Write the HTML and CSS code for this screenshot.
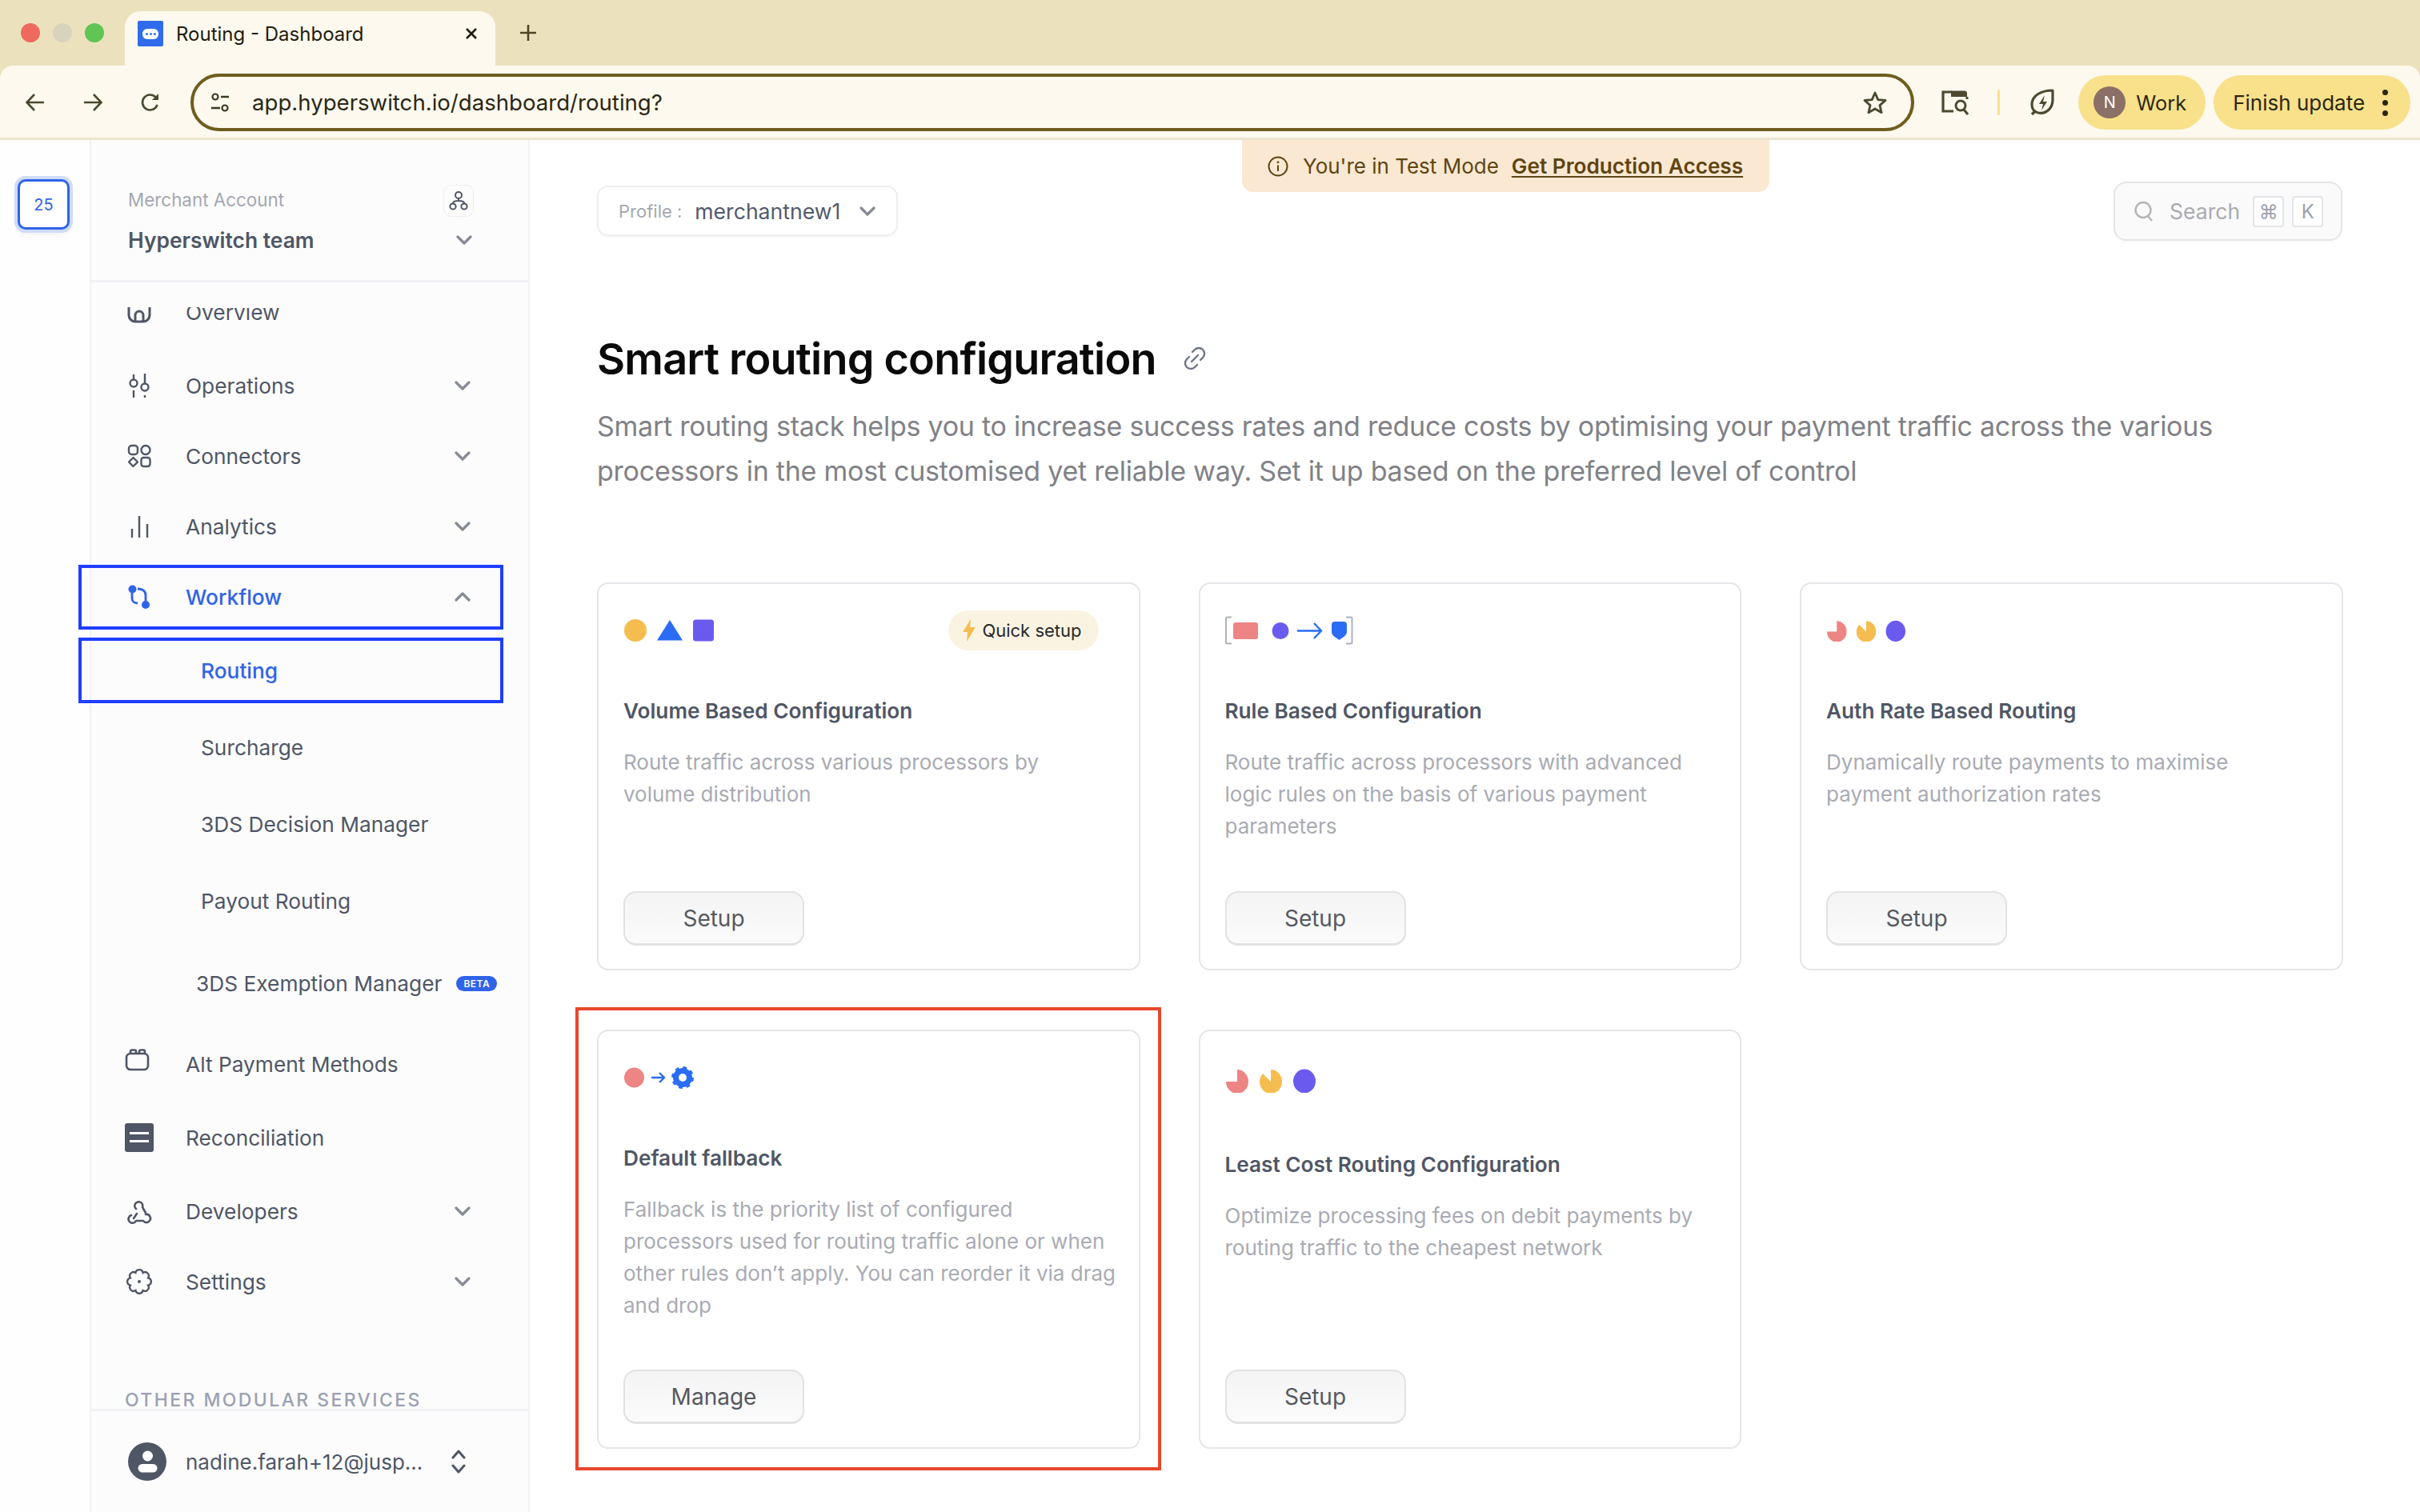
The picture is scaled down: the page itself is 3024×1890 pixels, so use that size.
FILE: index.html
```html
<!DOCTYPE html>
<html lang="en">
<head>
    <meta charset="UTF-8">
    <meta name="viewport" content="width=device-width, initial-scale=1.0">
    <title>Routing - Dashboard</title>
    <link rel="stylesheet" href="styles.css">
</head>
<body>
    <svg class="defs" aria-hidden="true">
        <symbol id="chev-down" viewBox="0 0 20 12"><path d="M2 2l8 8 8-8" fill="none" stroke="currentColor" stroke-width="3.2" stroke-linecap="round" stroke-linejoin="round"/></symbol>
        <symbol id="chev-up" viewBox="0 0 20 12"><path d="M2 10l8-8 8 8" fill="none" stroke="currentColor" stroke-width="3.2" stroke-linecap="round" stroke-linejoin="round"/></symbol>
        <symbol id="pies" viewBox="0 0 112 30">
            <path d="M14 1a14 15 0 1 1-14 15h14z" fill="#ec8583"/>
            <path d="M56 1a14 15 0 1 1-14 15 14 15 0 0 1 4-10l10 10z" fill="#f5bd4f"/>
            <ellipse cx="98" cy="15.500" rx="14" ry="15" fill="#6a5bee"/>
        </symbol>
    </svg>

    <!-- browser chrome -->
    <div class="tab-bar">
        <div class="lights">
            <span class="light red"></span>
            <span class="light grey"></span>
            <span class="light green"></span>
        </div>
        <div class="tab">
            <span class="favicon"><span class="favicon-pill"><i></i><i></i><i></i></span></span>
            <span class="tab-title">Routing - Dashboard</span>
            <svg class="tab-close" viewBox="0 0 16 16"><path d="M2 2l12 12M14 2L2 14" stroke="#1f1c10" stroke-width="2.600"/></svg>
        </div>
        <svg class="tab-new" viewBox="0 0 22 22"><path d="M11 1v20M1 11h20" stroke="#4d4727" stroke-width="2.600"/></svg>
    </div>

    <div class="toolbar">
        <svg class="tool-icon back" viewBox="0 0 26 26"><path d="M24 13H3M12 3L2.500 13l9.500 10" fill="none" stroke="#4d4830" stroke-width="2.600"/></svg>
        <svg class="tool-icon forward" viewBox="0 0 26 26"><path d="M2 13h21M14 3l9.500 10L14 23" fill="none" stroke="#4d4830" stroke-width="2.600"/></svg>
        <svg class="tool-icon reload" viewBox="0 0 26 26"><path d="M21.500 16a9.500 9.500 0 1 1-2-9.500L22 9" fill="none" stroke="#4d4830" stroke-width="2.600"/><path d="M23 2v8h-8z" fill="#4d4830"/></svg>
        <div class="address">
            <svg class="tune" viewBox="0 0 26 26"><circle cx="7" cy="6" r="3.500" fill="none" stroke="#3d3820" stroke-width="2.200"/><path d="M14 6h10M2 20h11" stroke="#3d3820" stroke-width="2.400"/><circle cx="19" cy="20" r="3.500" fill="none" stroke="#3d3820" stroke-width="2.200"/></svg>
            <span class="url">app.hyperswitch.io/dashboard/routing?</span>
            <svg class="star" viewBox="0 0 32 30"><path d="M16 3l3.800 8.600 9.200.9-7 6.100 2.100 9.100L16 23l-8.100 4.700L10 18.600l-7-6.100 9.200-.9z" fill="none" stroke="#4d4830" stroke-width="2.800" stroke-linejoin="round"/></svg>
        </div>
        <svg class="tool-icon lens" viewBox="0 0 36 32"><path d="M14 3H3v24h13" fill="none" stroke="#4d4830" stroke-width="3.200"/><path d="M13 1.500h17a3 3 0 0 1 3 3V9H13z" fill="#4d4830"/><path d="M33 9v3" stroke="#4d4830" stroke-width="3"/><circle cx="25" cy="20" r="6" fill="none" stroke="#4d4830" stroke-width="3"/><path d="M29 25l5 6" stroke="#4d4830" stroke-width="3.200"/></svg>
        <span class="tool-divider"></span>
        <svg class="tool-icon leaf" viewBox="0 0 32 36"><path d="M29 3C15 3 3 9 3 21c0 5 3 9 8 10 10 2 18-6 18-16z" fill="none" stroke="#4d4830" stroke-width="3.200" stroke-linejoin="round"/><path d="M8 28l-5 5" stroke="#4d4830" stroke-width="3.200"/><path d="M19 9l-7 11h5l-2 8 7-11h-5z" fill="#4d4830"/></svg>
        <div class="pill work-pill">
            <span class="pill-avatar">N</span>
            <span>Work</span>
        </div>
        <div class="pill update-pill">
            <span>Finish update</span>
            <span class="dots"><i></i><i></i><i></i></span>
        </div>
    </div>

    <div class="app">
        <div class="rail">
            <div class="rail-btn">25</div>
        </div>

        <aside class="sidebar">
            <div class="merchant">
                <div class="merchant-top">
                    <span class="merchant-label">Merchant Account</span>
                    <span class="org-btn">
                        <svg viewBox="0 0 24 26"><circle cx="12" cy="6" r="4" fill="none" stroke="#4f5665" stroke-width="2"/><circle cx="5" cy="20" r="3.600" fill="none" stroke="#4f5665" stroke-width="2"/><circle cx="19" cy="20" r="3.600" fill="none" stroke="#4f5665" stroke-width="2"/><path d="M12 10v4M5 16c0-2 2-3 7-3s7 1 7 3" fill="none" stroke="#4f5665" stroke-width="2"/></svg>
                    </span>
                </div>
                <div class="merchant-bottom">
                    <span class="merchant-name">Hyperswitch team</span>
                    <svg class="chev"><use href="#chev-down"/></svg>
                </div>
            </div>

            <nav class="nav-scroll">
                <div class="nav-list">
                    <div class="nav-row first">
                        <svg class="nav-icon" viewBox="0 0 32 32"><path d="M3 6v14a8 8 0 0 0 8 8h10a8 8 0 0 0 8-8V6" fill="none" stroke="#4f5665" stroke-width="3"/><path d="M11 28v-8a5 5 0 0 1 10 0v8" fill="none" stroke="#4f5665" stroke-width="3"/></svg>
                        <span class="nav-text">Overview</span>
                    </div>
                    <div class="nav-row">
                        <svg class="nav-icon" viewBox="0 0 32 32"><circle cx="9" cy="13" r="4.500" fill="none" stroke="#4f5665" stroke-width="2.400"/><path d="M9 2v6M9 22v9" stroke="#4f5665" stroke-width="2.400"/><circle cx="23" cy="18" r="4.500" fill="none" stroke="#4f5665" stroke-width="2.400"/><path d="M23 1v12M23 28v3" stroke="#4f5665" stroke-width="2.400"/></svg>
                        <span class="nav-text">Operations</span>
                        <svg class="chev"><use href="#chev-down"/></svg>
                    </div>
                    <div class="nav-row">
                        <svg class="nav-icon" viewBox="0 0 32 32"><rect x="3" y="3" width="11" height="11" rx="3.500" fill="none" stroke="#4f5665" stroke-width="2.400"/><circle cx="24" cy="8.500" r="5.500" fill="none" stroke="#4f5665" stroke-width="2.400"/><path d="M8.500 18l5.500 5.500L8.500 29 3 23.500z" fill="none" stroke="#4f5665" stroke-width="2.400" stroke-linejoin="round"/><rect x="18.500" y="18" width="11" height="11" rx="3" fill="none" stroke="#4f5665" stroke-width="2.400"/></svg>
                        <span class="nav-text">Connectors</span>
                        <svg class="chev"><use href="#chev-down"/></svg>
                    </div>
                    <div class="nav-row">
                        <svg class="nav-icon" viewBox="0 0 32 32"><path d="M7 30V19M16 30V3M26 30V13" stroke="#4f5665" stroke-width="2.400"/></svg>
                        <span class="nav-text">Analytics</span>
                        <svg class="chev"><use href="#chev-down"/></svg>
                    </div>
                    <div class="nav-row active marked">
                        <svg class="nav-icon" viewBox="0 0 32 32"><circle cx="7.500" cy="6.500" r="5" fill="#2f63e8"/><circle cx="24" cy="26" r="5" fill="#2f63e8"/><path d="M7 10v8c0 4 3 6 7 6M14 6c5 0 10 2 10 8v8" fill="none" stroke="#2f63e8" stroke-width="2.800"/></svg>
                        <span class="nav-text">Workflow</span>
                        <svg class="chev"><use href="#chev-up"/></svg>
                    </div>
                    <div class="nav-row sub active marked"><span class="nav-text">Routing</span></div>
                    <div class="nav-row sub"><span class="nav-text">Surcharge</span></div>
                    <div class="nav-row sub"><span class="nav-text">3DS Decision Manager</span></div>
                    <div class="nav-row sub"><span class="nav-text">Payout Routing</span></div>
                    <div class="nav-row sub exempt">
                        <span class="nav-text">3DS Exemption Manager</span>
                        <span class="beta">BETA</span>
                    </div>
                    <div class="nav-row wide alt">
                        <svg class="nav-icon" viewBox="0 0 32 32"><rect x="2" y="7" width="27" height="20" rx="5" fill="none" stroke="#4f5665" stroke-width="2.600"/><path d="M7 7V4.500A2 2 0 0 1 9 2.500h3a2 2 0 0 1 2 2V7M18 7V4.500a2 2 0 0 1 2-2h3a2 2 0 0 1 2 2V7" fill="none" stroke="#4f5665" stroke-width="2.600"/></svg>
                        <span class="nav-text">Alt Payment Methods</span>
                    </div>
                    <div class="nav-row wide recon">
                        <svg class="nav-icon recon-icon" viewBox="0 0 36 36"><rect width="36" height="36" rx="3" fill="#4f5665"/><path d="M6 12.500h24M6 22.500h24" stroke="#fff" stroke-width="3"/></svg>
                        <span class="nav-text">Reconciliation</span>
                    </div>
                    <div class="nav-row wide">
                        <svg class="nav-icon" viewBox="0 0 32 32"><path d="M13 19L9 25M12 13a5 5 0 1 1 8-2l4 7M24 20a5 5 0 1 1-3 8h-9a5 5 0 1 1-6-7" fill="none" stroke="#4f5665" stroke-width="2.600" stroke-linecap="round" stroke-linejoin="round"/></svg>
                        <span class="nav-text">Developers</span>
                        <svg class="chev"><use href="#chev-down"/></svg>
                    </div>
                    <div class="nav-row short">
                        <svg class="nav-icon" viewBox="0 0 32 32"><path d="M27.100 11.400A4.700 4.700 0 0 1 27.100 20.600 4.700 4.700 0 0 1 20.600 27.100 4.700 4.700 0 0 1 11.400 27.100 4.700 4.700 0 0 1 4.900 20.600 4.700 4.700 0 0 1 4.900 11.400 4.700 4.700 0 0 1 11.400 4.900 4.700 4.700 0 0 1 20.600 4.900 4.700 4.700 0 0 1 27.100 11.400z" fill="none" stroke="#4f5665" stroke-width="2.400"/><circle cx="16" cy="16" r="2" fill="#4f5665"/></svg>
                        <span class="nav-text">Settings</span>
                        <svg class="chev"><use href="#chev-down"/></svg>
                    </div>
                </div>
                <div class="modular">OTHER MODULAR SERVICES</div>
            </nav>

            <div class="user">
                <svg class="user-avatar" viewBox="0 0 48 48"><circle cx="24" cy="24" r="24" fill="#4f5665"/><circle cx="24.500" cy="17" r="6.500" fill="#fff"/><rect x="12.500" y="27" width="24" height="10.500" rx="5.200" fill="#fff"/></svg>
                <span class="user-name">nadine.farah+12@jusp...</span>
                <svg class="updown" viewBox="0 0 18 32"><path d="M2 11l7-8 7 8M2 21l7 8 7-8" fill="none" stroke="#4f5665" stroke-width="3" stroke-linecap="round" stroke-linejoin="round"/></svg>
            </div>
        </aside>

        <main class="main">
            <div class="test-banner">
                <svg class="info" viewBox="0 0 26 26"><circle cx="13" cy="13" r="11.500" fill="none" stroke="#5e4512" stroke-width="2"/><path d="M13 11.500v7.500" stroke="#5e4512" stroke-width="2"/><circle cx="13" cy="7.800" r="1.400" fill="#5e4512"/></svg>
                <span>You're in Test Mode</span>
                <a href="#" class="prod-link">Get Production Access</a>
            </div>

            <div class="top-row">
                <div class="profile">
                    <span class="profile-label">Profile :</span>
                    <span class="profile-name">merchantnew1</span>
                    <svg class="chev"><use href="#chev-down"/></svg>
                </div>
                <div class="search">
                    <svg class="search-icon" viewBox="0 0 24 26"><circle cx="11" cy="11.500" r="9.500" fill="none" stroke="#b4b5b9" stroke-width="2.400"/><path d="M17 19l5 6" stroke="#b4b5b9" stroke-width="2.400"/></svg>
                    <span class="search-text">Search</span>
                    <span class="key first-key">⌘</span>
                    <span class="key">K</span>
                </div>
            </div>

            <div class="title-row">
                <h1>Smart routing configuration</h1>
                <svg class="link-icon" viewBox="0 0 32 32"><path d="M13 8l3-3a6.500 6.500 0 0 1 10 10l-3 3M19 24l-3 3A6.500 6.500 0 0 1 6 17l3-3M12 20l8-8" fill="none" stroke="#6d7486" stroke-width="2.400" stroke-linecap="round"/></svg>
            </div>
            <p class="intro">Smart routing stack helps you to increase success rates and reduce costs by optimising your payment traffic across the various processors in the most customised yet reliable way. Set it up based on the preferred level of control</p>

            <div class="cards">
                <div class="card">
                    <div class="card-top">
                        <svg class="shapes" viewBox="0 0 112 30"><circle cx="14" cy="15" r="14" fill="#f5bd4f"/><path d="M41 27.500L57 2l16 25.500z" fill="#2a6df4"/><rect x="86" y="1.500" width="26" height="27" rx="3.500" fill="#6a5bee"/></svg>
                        <span class="quick">
                            <svg class="bolt" viewBox="0 0 16 28"><path d="M10 0L0 16h6l-1 12L16 10H9z" fill="#f5bd4f"/></svg>
                            Quick setup
                        </span>
                    </div>
                    <h3>Volume Based Configuration</h3>
                    <p class="desc">Route traffic across various processors by volume distribution</p>
                    <button type="button">Setup</button>
                </div>

                <div class="card">
                    <div class="card-top">
                        <svg class="rule-icon" viewBox="0 0 160 36">
                            <path d="M8 1.500H2.500a1.500 1.500 0 0 0-1.500 1.500v30a1.500 1.500 0 0 0 1.500 1.500H8M151 1.500h6a1.500 1.500 0 0 1 1.500 1.500v30a1.500 1.500 0 0 1-1.500 1.500h-6" fill="none" stroke="#aeb2c0" stroke-width="2"/>
                            <rect x="10" y="8" width="31" height="21" rx="3" fill="#ec8583"/>
                            <circle cx="69" cy="18.500" r="10.500" fill="#6a5bee"/>
                            <path d="M90 18.500h30M111 9l9 9.500-9 9.500" fill="none" stroke="#2a6df4" stroke-width="2.400"/>
                            <path d="M133 11a4 4 0 0 1 4-4h11a4 4 0 0 1 4 4v9c0 4-5 7-9.500 10C138 27 133 24 133 20z" fill="#2a6df4"/>
                        </svg>
                    </div>
                    <h3>Rule Based Configuration</h3>
                    <p class="desc">Route traffic across processors with advanced logic rules on the basis of various payment parameters</p>
                    <button type="button">Setup</button>
                </div>

                <div class="card">
                    <div class="card-top">
                        <svg class="pies"><use href="#pies"/></svg>
                    </div>
                    <h3>Auth Rate Based Routing</h3>
                    <p class="desc">Dynamically route payments to maximise payment authorization rates</p>
                    <button type="button">Setup</button>
                </div>

                <div class="card flagged">
                    <div class="card-top">
                        <svg class="fallback-icon" viewBox="0 0 88 28">
                            <circle cx="12.500" cy="14" r="12.500" fill="#ec8583"/>
                            <path d="M34 14h16M44 8l6 6-6 6" fill="none" stroke="#2a6df4" stroke-width="2.400"/>
                            <circle cx="73" cy="14" r="8.500" fill="none" stroke="#2a6df4" stroke-width="7"/>
                            <circle cx="73" cy="14" r="12.500" fill="none" stroke="#2a6df4" stroke-width="3" stroke-dasharray="4.900 4.900"/>
                        </svg>
                    </div>
                    <h3>Default fallback</h3>
                    <p class="desc">Fallback is the priority list of configured processors used for routing traffic alone or when other rules don’t apply. You can reorder it via drag and drop</p>
                    <button type="button">Manage</button>
                </div>

                <div class="card tall-top">
                    <div class="card-top">
                        <svg class="pies big"><use href="#pies"/></svg>
                    </div>
                    <h3>Least Cost Routing Configuration</h3>
                    <p class="desc">Optimize processing fees on debit payments by routing traffic to the cheapest network</p>
                    <button type="button">Setup</button>
                </div>
            </div>
        </main>
    </div>
</body>
</html>
```

FILE: styles.css
```css
* {
    box-sizing: border-box;
}

html,
body {
    margin: 0;
    padding: 0;
    height: 1890px;
    overflow: hidden;
}

body {
    display: flex;
    flex-direction: column;
    font-family: Inter, "Noto Sans", sans-serif;
    background-color: #ebe2bd;
    color: #4f5665;
}

.defs {
    position: absolute;
    width: 0;
    height: 0;
}

/* browser chrome */
.tab-bar {
    display: flex;
    align-items: flex-end;
    height: 82px;
    flex-shrink: 0;
}

.lights {
    display: flex;
    gap: 16px;
    width: 156px;
    height: 68px;
    padding: 15px 0 0 26px;
}

.light {
    width: 24px;
    height: 24px;
    border-radius: 50%;
}

.red {
    background-color: #ee6a5f;
}

.grey {
    background-color: #d8d3bd;
}

.green {
    background-color: #61c554;
}

.tab {
    display: flex;
    align-items: center;
    width: 463px;
    height: 68px;
    padding: 0 24px 12px 16px;
    background-color: #fdf9ee;
    border-radius: 20px 20px 0 0;
}

.favicon {
    display: flex;
    align-items: center;
    justify-content: center;
    width: 32px;
    height: 32px;
    background-color: #2f6bea;
    border-radius: 2px;
}

.favicon-pill {
    display: flex;
    align-items: center;
    justify-content: center;
    gap: 2px;
    width: 20px;
    height: 13px;
    background-color: #fff;
    border-radius: 6px;
}

.favicon-pill i {
    width: 3px;
    height: 3px;
    background-color: #2f6bea;
    border-radius: 50%;
}

.tab-title {
    margin-left: 16px;
    font-size: 24px;
    color: #1f1c10;
    flex: 1;
}

.tab-close {
    width: 16px;
    height: 16px;
    margin-right: -2px;
}

.tab-new {
    width: 22px;
    height: 22px;
    margin: 0 0 30px 30px;
}

.toolbar {
    display: flex;
    align-items: center;
    height: 93px;
    flex-shrink: 0;
    padding: 2px 12px 0 31px;
    background-color: #fdf9ee;
    border-bottom: 3px solid #ebe4d0;
    border-radius: 16px 16px 0 0;
}

.tool-icon {
    flex-shrink: 0;
}

.back,
.forward,
.reload {
    width: 26px;
    height: 26px;
}

.forward,
.reload {
    margin-left: 46px;
}

.address {
    display: flex;
    align-items: center;
    width: 2156px;
    height: 72px;
    margin-left: 37px;
    padding: 0 29px 0 20px;
    border: 4px solid #6e5d1d;
    border-radius: 36px;
}

.tune {
    width: 26px;
    height: 26px;
}

.url {
    margin-left: 27px;
    font-size: 27.6px;
    color: #2b2716;
    flex: 1;
}

.star {
    width: 32px;
    height: 30px;
}

.lens {
    width: 36px;
    height: 32px;
    margin-left: 33px;
}

.tool-divider {
    width: 3px;
    height: 32px;
    margin: 0 37px 0 35px;
    background-color: #f8e18a;
    border-radius: 2px;
}

.leaf {
    width: 32px;
    height: 36px;
}

.pill {
    display: flex;
    align-items: center;
    height: 68px;
    background-color: #f8e18a;
    border-radius: 34px;
    font-size: 26px;
    color: #2b2716;
}

.work-pill {
    gap: 13px;
    width: 159px;
    margin-left: 29px;
    padding-left: 19px;
    font-size: 25.4px;
}

.pill-avatar {
    display: flex;
    align-items: center;
    justify-content: center;
    width: 40px;
    height: 40px;
    background-color: #8a7067;
    border-radius: 50%;
    color: #fff;
    font-size: 20px;
}

.update-pill {
    justify-content: space-between;
    width: 246px;
    margin-left: 10px;
    padding: 0 28px 0 24px;
}

.dots {
    display: flex;
    flex-direction: column;
    gap: 6px;
}

.dots i {
    width: 7px;
    height: 7px;
    background-color: #2b2716;
    border-radius: 50%;
}

/* app */
.app {
    display: flex;
    flex: 1;
    min-height: 0;
    background-color: #fff;
}

.rail {
    width: 112px;
    flex-shrink: 0;
    padding: 49px 0 0 22px;
    background-color: #fefefe;
}

.rail-btn {
    display: flex;
    align-items: center;
    justify-content: center;
    width: 65px;
    height: 63px;
    background-color: #fff;
    border: 3px solid #2f63e8;
    border-radius: 10px;
    box-shadow: 0 0 0 4px #cfdcf9, 0 6px 10px rgba(0, 0, 0, 0.06);
    color: #2f63e8;
    font-size: 20px;
}

.sidebar {
    display: flex;
    flex-direction: column;
    width: 550px;
    flex-shrink: 0;
    background-color: #fcfcfd;
    border-left: 2px solid #f2f2f5;
    border-right: 2px solid #f2f2f5;
}

.merchant {
    height: 178px;
    flex-shrink: 0;
    padding: 54px 70px 0 46px;
    border-bottom: 3px solid #f2f2f5;
}

.merchant-top,
.merchant-bottom {
    display: flex;
    align-items: center;
    justify-content: space-between;
}

.merchant-top {
    height: 40px;
}

.merchant-label {
    font-size: 22.4px;
    color: #a4a7af;
}

.org-btn {
    display: flex;
    align-items: center;
    justify-content: center;
    width: 38px;
    height: 40px;
    margin: 4px -2px 0 0;
    border: 1px solid #eeeef1;
    border-radius: 10px;
}

.org-btn svg {
    width: 24px;
    height: 26px;
}

.merchant-bottom {
    height: 36px;
    margin-top: 13px;
}

.merchant-name {
    font-size: 26.4px;
    font-weight: 600;
    color: #4f5665;
}

.chev {
    width: 20px;
    height: 12px;
    flex-shrink: 0;
    color: #858a94;
}

.nav-scroll {
    flex: 1;
    min-height: 0;
    margin-top: 31px;
    overflow-x: visible;
    overflow-y: clip;
}

.nav-list {
    margin-top: -42px;
}

.nav-row {
    position: relative;
    display: flex;
    align-items: center;
    height: 88px;
    padding: 0 72px 0 44px;
    font-size: 26.3px;
    color: #4f5665;
}

.first {
    height: 96px;
}

.nav-icon {
    width: 32px;
    height: 32px;
    flex-shrink: 0;
}

.nav-text {
    margin-left: 42px;
    flex: 1;
    white-space: nowrap;
}

.active .nav-text {
    color: #2f63e8;
    font-weight: 500;
}

.marked::after {
    content: "";
    position: absolute;
    top: 4px;
    bottom: 3px;
    left: -16px;
    right: 31px;
    border: 4px solid #1f3dff;
}

.sub {
    height: 96px;
}

.sub .nav-text {
    margin-left: 93px;
    flex: none;
}

.sub.marked::after {
    top: 7px;
    bottom: 7px;
}

.exempt {
    height: 110px;
}

.exempt .nav-text {
    margin-left: 87px;
}

.beta {
    margin-left: 18px;
    padding: 0 9px;
    height: 19px;
    line-height: 19px;
    background-color: #2f63e8;
    border-radius: 10px;
    color: #fff;
    font-size: 12px;
    font-weight: 600;
    letter-spacing: 0.5px;
}

.wide {
    height: 92px;
}

.short {
    height: 84px;
}

.alt .nav-icon {
    margin: -8px 0 0 -2px;
}

.alt .nav-text {
    margin-left: 44px;
}

.recon-icon {
    width: 36px;
    height: 36px;
    margin-left: -2px;
}

.recon .nav-text {
    margin-left: 40px;
}

.modular {
    margin: 92px 0 0 42px;
    font-size: 23px;
    line-height: 28px;
    font-weight: 500;
    letter-spacing: 2.4px;
    color: #9ba1b0;
}

.user {
    display: flex;
    align-items: center;
    height: 129px;
    flex-shrink: 0;
    padding: 0 78px 0 46px;
    border-top: 3px solid #f2f2f5;
}

.user-avatar {
    width: 48px;
    height: 48px;
}

.user-name {
    margin-left: 24px;
    flex: 1;
    font-size: 26px;
    white-space: nowrap;
}

.updown {
    width: 18px;
    height: 32px;
}

/* main area */
.main {
    position: relative;
    flex: 1;
    min-width: 0;
    padding: 52px 97px 0 84px;
}

.test-banner {
    position: absolute;
    top: 0;
    left: 890px;
    display: flex;
    align-items: center;
    width: 659px;
    height: 65px;
    padding: 0 0 0 32px;
    background-color: #fbe8d2;
    border-radius: 0 0 14px 14px;
    font-size: 26px;
    color: #5e4512;
}

.info {
    width: 26px;
    height: 26px;
    margin-right: 18px;
}

.prod-link {
    margin-left: 16px;
    color: #5e4512;
    font-size: 26.2px;
    font-weight: 600;
    text-decoration: underline;
    text-decoration-thickness: 2px;
    text-underline-offset: 3px;
}

.top-row {
    display: flex;
    align-items: flex-start;
    justify-content: space-between;
}

.profile {
    display: flex;
    align-items: center;
    width: 376px;
    height: 63px;
    margin-top: 5px;
    padding-left: 25px;
    border: 2px solid #efeff2;
    border-radius: 14px;
    box-shadow: 0 1px 2px rgba(0, 0, 0, 0.05);
}

.profile-label {
    font-size: 22px;
    color: #a4a7af;
}

.profile-name {
    margin: 0 24px 0 16px;
    font-size: 26.6px;
    color: #515a6d;
}

.search {
    display: flex;
    align-items: center;
    width: 286px;
    height: 74px;
    padding-left: 24px;
    background-color: #fafafa;
    border: 2px solid #e6e6e9;
    border-radius: 16px;
    box-shadow: 0 1px 3px rgba(0, 0, 0, 0.04);
}

.search-icon {
    width: 24px;
    height: 26px;
}

.search-text {
    margin-left: 20px;
    font-size: 26.6px;
    color: #a9abb0;
}

.key {
    display: flex;
    align-items: center;
    justify-content: center;
    width: 39px;
    height: 39px;
    margin-left: 10px;
    background-color: #fff;
    border: 2px solid #e4e5ea;
    border-radius: 4px;
    font-size: 24px;
    color: #9ba1b0;
}

.first-key {
    margin-left: 16px;
}

.title-row {
    display: flex;
    align-items: center;
    gap: 32px;
    height: 70px;
    margin-top: 112px;
}

h1 {
    margin: 0;
    font-size: 54px;
    font-weight: 600;
    color: #0a0a0a;
    letter-spacing: -0.8px;
    white-space: nowrap;
}

.link-icon {
    width: 32px;
    height: 32px;
}

.intro {
    width: 2060px;
    margin: 22px 0 0;
    font-size: 34px;
    letter-spacing: -0.24px;
    line-height: 56px;
    color: #808186;
}

.cards {
    display: grid;
    grid-template-columns: repeat(3, 678.5px);
    grid-template-rows: 485px 524px;
    column-gap: 73px;
    row-gap: 74px;
    margin-top: 111px;
}

.card {
    position: relative;
    display: flex;
    flex-direction: column;
    padding: 33px 32px 29px 31px;
    background-color: #fff;
    border: 2px solid #e6e6ea;
    border-radius: 14px;
}

.flagged {
    padding-right: 18px;
}

.flagged::after {
    content: "";
    position: absolute;
    top: -30px;
    bottom: -29px;
    left: -29px;
    right: -28px;
    border: 4px solid #e8472b;
}

.card-top {
    display: flex;
    align-items: center;
    justify-content: space-between;
    height: 50px;
}

.tall-top .card-top {
    height: 58px;
}

h3 {
    margin: 60px 0 0;
    font-size: 26.2px;
    line-height: 32px;
    font-weight: 600;
    color: #4f5665;
}

.desc {
    margin: 28px 0 0;
    font-size: 26px;
    line-height: 40px;
    color: #a9abb3;
}

button {
    width: 226px;
    height: 68px;
    margin-top: auto;
    padding: 0;
    background: linear-gradient(#f4f4f5, #fbfbfb);
    border: 2px solid #e2e2e4;
    border-bottom-width: 3px;
    border-radius: 16px;
    font-family: inherit;
    font-size: 28px;
    color: #55595f;
}

.shapes {
    width: 112px;
    height: 30px;
    margin-left: 1px;
}

.rule-icon {
    width: 160px;
    height: 36px;
}

.pies {
    width: 98px;
    height: 27px;
    margin-left: 1px;
}

.pies.big {
    width: 112px;
    height: 30px;
}

.fallback-icon {
    width: 88px;
    height: 28px;
    margin-left: 1px;
}

.quick {
    display: flex;
    align-items: center;
    gap: 8px;
    height: 50px;
    margin-right: 18px;
    padding: 0 21px 0 18px;
    background-color: #fbf3e2;
    border-radius: 25px;
    font-size: 22px;
    color: #26282c;
}

.bolt {
    width: 16px;
    height: 28px;
}
```
